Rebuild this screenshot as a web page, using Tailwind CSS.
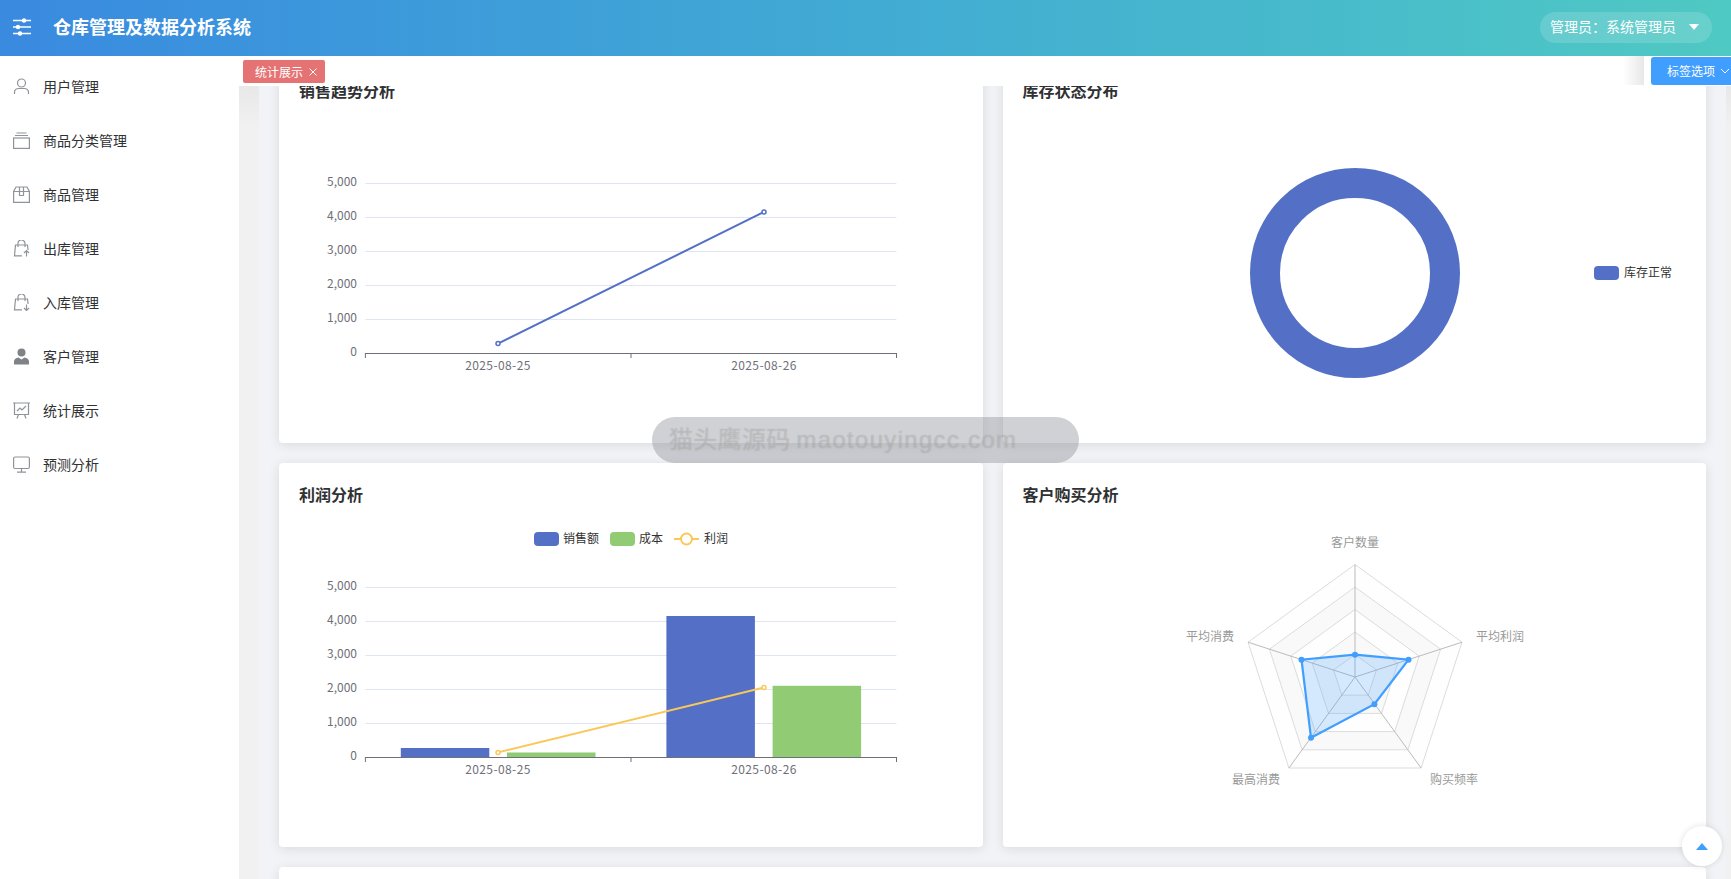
<!DOCTYPE html>
<html lang="zh-CN">
<head>
    <meta charset="UTF-8">
    <title>仓库管理及数据分析系统</title>
    <script src="https://cdn.jsdelivr.net/npm/@tailwindcss/browser@4"></script>
</head>
<body class="h-[879px] w-[1731px] overflow-hidden bg-white font-['Noto_Sans_CJK_SC',sans-serif] text-[#303133]">

    <!-- header -->
    <header class="flex h-[56px] items-center justify-between bg-gradient-to-r from-[#3a8ae0] to-[#4fc9c3] pl-[13px] pr-[19px] text-white">
        <div class="mb-[3px] flex items-center">
            <svg class="h-[18px] w-[18px]" viewBox="0 0 18 18" fill="none" stroke="white" stroke-width="1.4">
                <path d="M0 2.500h18M0 9h18M0 15.500h18"/>
                <circle cx="11" cy="2.500" r="1.500" fill="white"/>
                <circle cx="5" cy="9" r="1.500" fill="white"/>
                <circle cx="7" cy="15.500" r="1.500" fill="white"/>
            </svg>
            <h1 class="ml-[22px] text-[18px] font-bold">仓库管理及数据分析系统</h1>
        </div>
        <div class="mb-[2px] flex h-[31px] w-[172px] items-center rounded-full bg-white/15 pl-[10px] text-[14px]">
            <span class="mb-[1px]">管理员：系统管理员</span>
            <span class="ml-[13px] h-0 w-0 border-x-[5px] border-t-[6px] border-x-transparent border-t-white"></span>
        </div>
    </header>

    <div class="flex h-[823px]">
        <!-- sidebar -->
        <aside class="w-[239px] shrink-0 pt-[3px] text-[14px]">
            <a class="flex h-[54px] items-center pl-[13px]">
                <svg class="mr-[13px] h-[17px] w-[17px]" viewBox="0 0 17 17" fill="none" stroke="#909399" stroke-width="1.2"><circle cx="8.500" cy="5" r="4"/><path d="M1.500 16v-1.500c0-2.500 2-4 4.500-4h5c2.500 0 4.500 1.500 4.500 4V16"/></svg>
                用户管理
            </a>
            <a class="flex h-[54px] items-center pl-[13px]">
                <svg class="mr-[13px] h-[17px] w-[17px]" viewBox="0 0 17 17" fill="none" stroke="#909399" stroke-width="1.2"><path d="M3.500 1h10M2 3.500h13"/><rect x="0.600" y="6" width="15.800" height="10.400"/></svg>
                商品分类管理
            </a>
            <a class="flex h-[54px] items-center pl-[13px]">
                <svg class="mr-[13px] h-[17px] w-[17px]" viewBox="0 0 17 17" fill="none" stroke="#909399" stroke-width="1.2"><path d="M3 1h11l2.400 4.500V16.400H.6V5.500z"/><path d="M.6 5.500h15.800M6.500 1v8.500h4V1"/></svg>
                商品管理
            </a>
            <a class="flex h-[54px] items-center pl-[13px]">
                <svg class="mr-[13px] h-[17px] w-[17px]" viewBox="0 0 17 17" fill="none" stroke="#909399" stroke-width="1.2"><path d="M5 7V3.500a3.500 3.500 0 0 1 7 0V7"/><path d="M9 15.800H1.500L2.500 5h12l.6 5"/><path d="M13.500 16.500V10.500M11 13l2.500-2.500L16 13"/></svg>
                出库管理
            </a>
            <a class="flex h-[54px] items-center pl-[13px]">
                <svg class="mr-[13px] h-[17px] w-[17px]" viewBox="0 0 17 17" fill="none" stroke="#909399" stroke-width="1.2"><path d="M5 7V3.500a3.500 3.500 0 0 1 7 0V7"/><path d="M9 15.800H1.500L2.500 5h12l.6 5"/><path d="M13.500 10.500v6M11 14l2.500 2.500L16 14"/></svg>
                入库管理
            </a>
            <a class="flex h-[54px] items-center pl-[13px]">
                <svg class="mr-[13px] h-[17px] w-[17px]" viewBox="0 0 17 17" fill="#7f8387"><circle cx="8.500" cy="4.500" r="4"/><path d="M1 16.500v-3c0-2.500 2.500-3.500 4.500-4l3 2 3-2c2 .5 4.500 1.500 4.500 4v3z"/></svg>
                客户管理
            </a>
            <a class="flex h-[54px] items-center pl-[13px]">
                <svg class="mr-[13px] h-[17px] w-[17px]" viewBox="0 0 17 17" fill="none" stroke="#909399" stroke-width="1.2"><path d="M0 1h17M1.500 1v11.500h14V1M5.500 12.500 4 16.500M11.500 12.500l1.500 4"/><path d="M4 9l3-3 2 2 4-4"/></svg>
                统计展示
            </a>
            <a class="flex h-[54px] items-center pl-[13px]">
                <svg class="mr-[13px] h-[17px] w-[17px]" viewBox="0 0 17 17" fill="none" stroke="#909399" stroke-width="1.2"><rect x="0.600" y="1" width="15.800" height="11.500" rx="1.500"/><path d="M8.500 12.500v3.500M4 16.200h9"/></svg>
                预测分析
            </a>
        </aside>

        <!-- main -->
        <main class="flex-1 overflow-hidden bg-[linear-gradient(#e8e8e8_30px,#f1f1f1_70px)] pl-[20px] pr-[5px]">
            <div class="h-full bg-[#f2f3f6]">
                <div class="grid grid-cols-2 gap-5 px-5 pt-[3px]">
                    <section class="h-[384px] rounded bg-white p-5 shadow-[0_2px_12px_rgba(0,0,0,0.1)]">
                        <h2 class="-mt-[1px] h-[45px] text-[16px] leading-[24px] font-bold">销售趋势分析</h2>
                        <svg class="h-[300px] w-[664px]" viewBox="0 0 664 300" font-size="12" fill="#6e7079">
                            <path d="M66.400 60.500h531M66.400 94.500h531M66.400 128.500h531M66.400 162.500h531M66.400 196.500h531" stroke="#e0e6f1" fill="none"/>
                            <path d="M66.400 230.500h531M66.400 230v5M332 230v5M597.500 230v5" stroke="#6e7079" fill="none"/>
                            <g text-anchor="end">
                                <text x="58" y="63">5,000</text><text x="58" y="97">4,000</text><text x="58" y="131">3,000</text><text x="58" y="165">2,000</text><text x="58" y="199">1,000</text><text x="58" y="233">0</text>
                            </g>
                            <g text-anchor="middle" letter-spacing="0.4">
                                <text x="199" y="246.500">2025-08-25</text><text x="465" y="246.500">2025-08-26</text>
                            </g>
                            <path d="M199 220.600 465 89" stroke="#5470c6" stroke-width="2" fill="none"/>
                            <circle cx="199" cy="220.600" r="2" fill="#fff" stroke="#5470c6" stroke-width="1.500"/>
                            <circle cx="465" cy="89" r="2" fill="#fff" stroke="#5470c6" stroke-width="1.500"/>
                        </svg>
                    </section>

                    <section class="h-[384px] rounded bg-white p-5 shadow-[0_2px_12px_rgba(0,0,0,0.1)]">
                        <h2 class="-mt-[1px] h-[45px] text-[16px] leading-[24px] font-bold">库存状态分布</h2>
                        <svg class="h-[300px] w-[664px]" viewBox="0 0 664 300" font-size="12" fill="#333">
                            <circle cx="332" cy="150" r="90" fill="none" stroke="#5470c6" stroke-width="30"/>
                            <rect x="571" y="143" width="25" height="14" rx="4" fill="#5470c6"/>
                            <text x="601" y="154">库存正常</text>
                        </svg>
                    </section>

                    <section class="h-[384px] rounded bg-white p-5 shadow-[0_2px_12px_rgba(0,0,0,0.1)]">
                        <h2 class="-mt-[1px] h-[45px] text-[16px] leading-[24px] font-bold">利润分析</h2>
                        <svg class="h-[300px] w-[664px]" viewBox="0 0 664 300" font-size="12" fill="#6e7079">
                            <rect x="235" y="5" width="25" height="14" rx="4" fill="#5470c6"/>
                            <text x="264" y="16" fill="#333">销售额</text>
                            <rect x="311" y="5" width="25" height="14" rx="4" fill="#91cc75"/>
                            <text x="340" y="16" fill="#333">成本</text>
                            <path d="M375 12h25" stroke="#fac858" stroke-width="2"/>
                            <circle cx="387.500" cy="12" r="5.500" fill="#fff" stroke="#fac858" stroke-width="2"/>
                            <text x="405" y="16" fill="#333">利润</text>
                            <path d="M66.400 60.500h531M66.400 94.500h531M66.400 128.500h531M66.400 162.500h531M66.400 196.500h531" stroke="#e0e6f1" fill="none"/>
                            <rect x="101.800" y="221" width="88.500" height="9.500" fill="#5470c6"/>
                            <rect x="208" y="225.500" width="88.500" height="5" fill="#91cc75"/>
                            <rect x="367.400" y="89" width="88.500" height="141.500" fill="#5470c6"/>
                            <rect x="473.600" y="158.800" width="88.500" height="71.700" fill="#91cc75"/>
                            <path d="M66.400 230.500h531M66.400 230v5M332 230v5M597.500 230v5" stroke="#6e7079" fill="none"/>
                            <g text-anchor="end">
                                <text x="58" y="63">5,000</text><text x="58" y="97">4,000</text><text x="58" y="131">3,000</text><text x="58" y="165">2,000</text><text x="58" y="199">1,000</text><text x="58" y="233">0</text>
                            </g>
                            <g text-anchor="middle" letter-spacing="0.4">
                                <text x="199" y="246.500">2025-08-25</text><text x="465" y="246.500">2025-08-26</text>
                            </g>
                            <path d="M199 225.400 465 160.500" stroke="#fac858" stroke-width="2" fill="none"/>
                            <circle cx="199" cy="225.400" r="2" fill="#fff" stroke="#fac858" stroke-width="1.500"/>
                            <circle cx="465" cy="160.500" r="2" fill="#fff" stroke="#fac858" stroke-width="1.500"/>
                        </svg>
                    </section>

                    <section class="h-[384px] rounded bg-white p-5 shadow-[0_2px_12px_rgba(0,0,0,0.1)]">
                        <h2 class="-mt-[1px] h-[45px] text-[16px] leading-[24px] font-bold">客户购买分析</h2>
                        <svg class="h-[300px] w-[664px]" viewBox="0 0 664 300" font-size="12" fill="#999">
                            <g transform="translate(332 150)" fill="none">
                                <path d="M0-112.500 107-34.800 66.100 91 -66.100 91 -107-34.800Z" fill="#fefefe" stroke="#dcdcdc"/>
                                <path d="M0-90 85.600-27.800 52.900 72.800 -52.900 72.800 -85.600-27.800Z" fill="#f9f9f9" stroke="#dcdcdc"/>
                                <path d="M0-67.500 64.200-20.900 39.700 54.600 -39.700 54.600 -64.200-20.900Z" fill="#fefefe" stroke="#dcdcdc"/>
                                <path d="M0-45 42.800-13.900 26.500 36.400 -26.500 36.400 -42.800-13.900Z" fill="#f9f9f9" stroke="#dcdcdc"/>
                                <path d="M0-22.500 21.400-7 13.200 18.200 -13.200 18.200 -21.400-7Z" fill="#fefefe" stroke="#dcdcdc"/>
                                <path d="M0 0V-112.500M0 0 107-34.800M0 0 66.100 91M0 0-66.100 91M0 0-107-34.800" stroke="#bbb"/>
                                <path d="M0-22.300 53.500-17.300 19.400 27.200 -44 60.800 -53.500-17.300Z" fill="#409eff" fill-opacity="0.22" stroke="#409eff" stroke-width="2.200"/>
                                <g fill="#409eff">
                                    <circle cx="0" cy="-22.300" r="3"/><circle cx="53.500" cy="-17.300" r="3"/><circle cx="19.400" cy="27.200" r="3"/><circle cx="-44" cy="60.800" r="3"/><circle cx="-53.500" cy="-17.300" r="3"/>
                                </g>
                            </g>
                            <text x="332" y="20" text-anchor="middle">客户数量</text>
                            <text x="453" y="114">平均利润</text>
                            <text x="163" y="114">平均消费</text>
                            <text x="209" y="257">最高消费</text>
                            <text x="407" y="257">购买频率</text>
                        </svg>
                    </section>

                    <section class="col-span-2 h-[384px] rounded bg-white p-5 shadow-[0_2px_12px_rgba(0,0,0,0.1)]"></section>
                </div>
            </div>
        </main>
    </div>

    <!-- tag bar, sits over the scrolled content -->
    <div class="absolute left-[239px] top-[56px] flex h-[30px] w-[1492px] bg-white pl-[4px] pt-[4px]">
        <span class="flex h-[23px] w-[82px] items-center rounded-[2px] bg-[#e57373] pl-[12px] text-[12px] text-white">
            统计展示
            <svg class="ml-[6px] h-[8px] w-[8px]" viewBox="0 0 8 8" stroke="white" stroke-width="1"><path d="M.5.500l7 7M7.500.500l-7 7"/></svg>
        </span>
        <div class="absolute right-[87px] top-0 h-[29px] w-[21px] bg-gradient-to-r from-white to-[#e8e8e8]"></div>
        <span class="absolute right-0 top-[1px] flex h-[28px] w-[80px] items-center rounded-l-[3px] bg-[#409eff] pl-[16px] text-[12px] text-white">标签选项<svg class="ml-[5px] h-[10px] w-[10px]" viewBox="0 0 10 10" fill="none" stroke="white"><path d="M1 3l4 4 4-4"/></svg></span>
    </div>

    <!-- watermark -->
    <div class="absolute left-[652px] top-[417px] flex h-[46px] w-[427px] items-center rounded-[23px] bg-[#8a8c94]/40 pl-[17px] font-['Liberation_Sans','Noto_Sans_CJK_SC',sans-serif] text-[24px] text-white/30 [text-shadow:0_0_1px_rgba(0,0,0,0.25)]"><span class="tracking-[0.3px]">猫头鹰源码</span><span class="ml-[6px] tracking-[1.3px]">maotouyingcc.com</span></div>

    <!-- back to top -->
    <button class="absolute left-[1682px] top-[826px] flex h-[40px] w-[40px] items-center justify-center rounded-full bg-white shadow-[0_0_6px_rgba(0,0,0,0.12)]">
        <span class="h-0 w-0 border-x-[6px] border-b-[7px] border-x-transparent border-b-[#409eff]"></span>
    </button>
</body>
</html>
